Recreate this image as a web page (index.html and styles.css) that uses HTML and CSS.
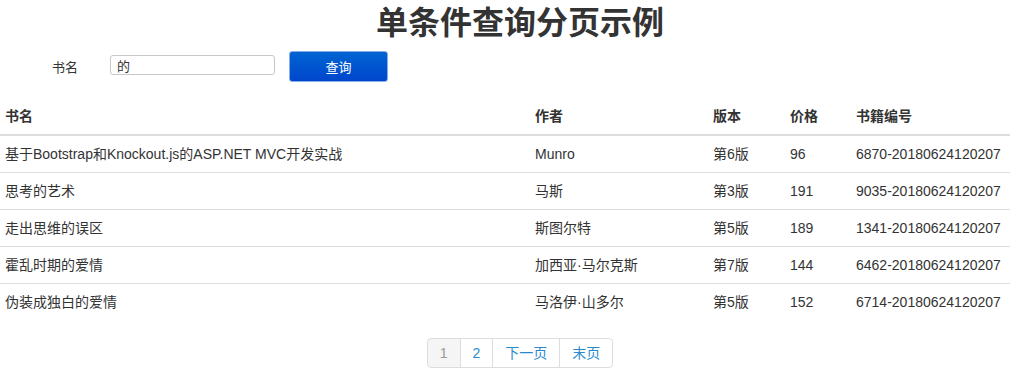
FILE: index.html
```html
<!DOCTYPE html>
<html lang="zh-CN">
  <head>
    <meta charset="UTF-8" />
    <title>单条件查询分页示例</title>
    <link rel="stylesheet" href="styles.css">
  </head>
  <body>
    <h1 class="page-title">单条件查询分页示例</h1>

    <form class="search-form">
      <label class="search-label" for="bookName">书名</label>
      <input class="search-input" id="bookName" type="text" value="的" />
      <button class="search-btn" type="button">查询</button>
    </form>

    <table class="book-table">
      <thead>
        <tr>
          <th class="col-name">书名</th>
          <th class="col-author">作者</th>
          <th class="col-edition">版本</th>
          <th class="col-price">价格</th>
          <th class="col-code">书籍编号</th>
        </tr>
      </thead>
      <tbody>
        <tr>
          <td>基于Bootstrap和Knockout.js的ASP.NET MVC开发实战</td>
          <td>Munro</td>
          <td>第6版</td>
          <td>96</td>
          <td>6870-20180624120207</td>
        </tr>
        <tr>
          <td>思考的艺术</td>
          <td>马斯</td>
          <td>第3版</td>
          <td>191</td>
          <td>9035-20180624120207</td>
        </tr>
        <tr>
          <td>走出思维的误区</td>
          <td>斯图尔特</td>
          <td>第5版</td>
          <td>189</td>
          <td>1341-20180624120207</td>
        </tr>
        <tr>
          <td>霍乱时期的爱情</td>
          <td>加西亚·马尔克斯</td>
          <td>第7版</td>
          <td>144</td>
          <td>6462-20180624120207</td>
        </tr>
        <tr>
          <td>伪装成独白的爱情</td>
          <td>马洛伊·山多尔</td>
          <td>第5版</td>
          <td>152</td>
          <td>6714-20180624120207</td>
        </tr>
      </tbody>
    </table>

    <div class="pager-wrap">
      <ul class="pager">
        <li class="active"><span>1</span></li>
        <li><a href="#">2</a></li>
        <li><a href="#">下一页</a></li>
        <li><a href="#">末页</a></li>
      </ul>
    </div>
  </body>
</html>
```

FILE: styles.css
```css
* {
  box-sizing: border-box;
  margin: 0;
  padding: 0;
}

body {
  font-family: "Liberation Sans", Arial, "Noto Sans CJK SC", sans-serif;
  font-size: 14px;
  line-height: 20px;
  color: #333;
  background: #fff;
}

.page-title {
  text-align: center;
  padding-left: 30px;
  font-size: 32px;
  line-height: 46px;
  font-weight: bold;
  color: #333;
}

.search-form {
  display: flex;
  align-items: center;
  height: 34px;
  margin-top: 3px;
}

.search-label {
  width: 110px;
  padding-left: 52px;
  font-size: 13px;
  position: relative;
  top: 2px;
}

.search-input {
  width: 165px;
  height: 20px;
  padding: 0 6px;
  border: 1px solid #c8c8c8;
  border-radius: 3px;
  font-family: inherit;
  font-size: 13px;
  color: #333;
  outline: none;
  position: relative;
  top: -1px;
}

.search-btn {
  width: 99px;
  height: 31px;
  margin-left: 14px;
  border: 1px solid #86aee8;
  border-radius: 3px;
  background: linear-gradient(#0064d2, #0046cc);
  color: #fff;
  font-family: inherit;
  font-size: 13px;
}

.book-table {
  width: 100%;
  border-collapse: collapse;
  margin-top: 15px;
  margin-bottom: 18px;
}

.book-table th,
.book-table td {
  text-align: left;
  padding: 8px 5px;
  line-height: 20px;
  vertical-align: top;
}

.book-table th {
  font-weight: bold;
  border-bottom: 2px solid #ddd;
}

.book-table td {
  border-top: 1px solid #ddd;
}

.col-name {
  width: 530px;
}

.col-author {
  width: 178px;
}

.col-edition {
  width: 77px;
}

.col-price {
  width: 66px;
}

.pager-wrap {
  display: flex;
  justify-content: center;
  padding-left: 30px;
}

.pager {
  display: flex;
  list-style: none;
}

.pager li a,
.pager li span {
  display: block;
  padding: 5px 12px;
  line-height: 18px;
  border: 1px solid #ddd;
  margin-left: -1px;
  color: #2a8ad0;
  text-decoration: none;
  background: #fff;
}

.pager li:first-child span {
  margin-left: 0;
  border-radius: 4px 0 0 4px;
}

.pager li:last-child a {
  border-radius: 0 4px 4px 0;
}

.pager li.active span {
  background: #f5f5f5;
  color: #999;
}
```
